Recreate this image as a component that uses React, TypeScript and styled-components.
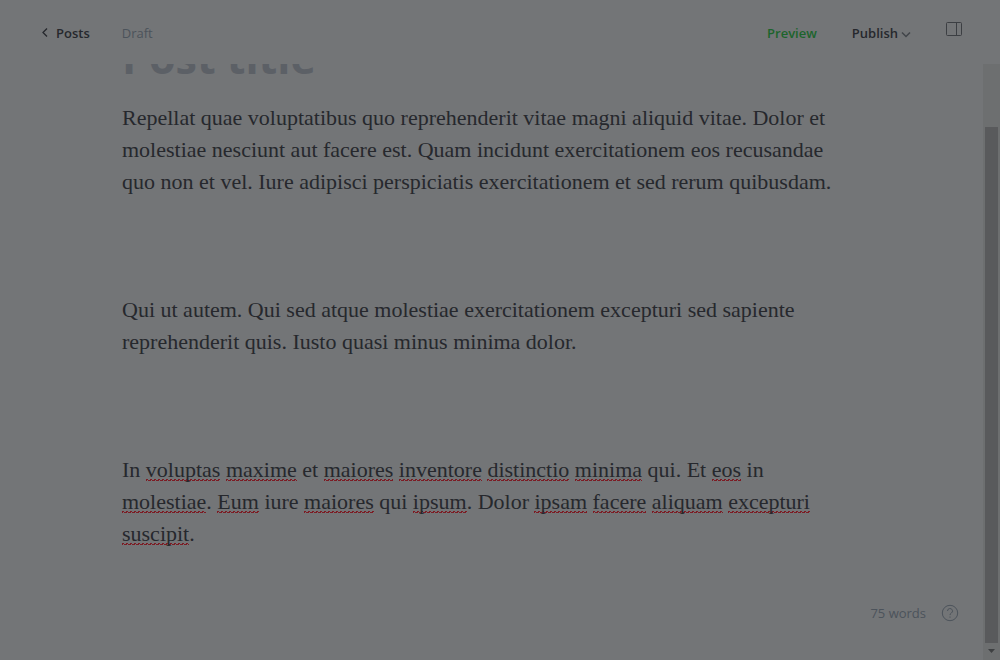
import React from "react";
import styled, { createGlobalStyle } from "styled-components";

const ink = "#26282d";
const muted = "#4c535b";
const canvas = "#737577";
const squiggle = "#7c1c24";

const GlobalStyle = createGlobalStyle`
  * { box-sizing: border-box; }
  html, body, #root { height: 100%; }
  body {
    margin: 0;
    background: ${canvas};
    color: ${ink};
    font-family: "Open Sans", "Noto Sans", sans-serif;
  }
`;

const Editor = styled.div`
  display: flex;
  flex-direction: column;
  height: 100vh;
  overflow: hidden;
`;

const Header = styled.header`
  display: flex;
  align-items: center;
  flex: none;
  height: 64px;
  padding: 2px 38px 0 40px;
  font-size: 13px;
  line-height: 20px;
`;

const BackLink = styled.a`
  display: flex;
  align-items: center;
  gap: 6px;
  color: ${ink};
  font-weight: 600;
  text-decoration: none;
`;

const Status = styled.span`
  margin-left: 32px;
  color: ${muted};
`;

const Actions = styled.div`
  display: flex;
  align-items: center;
  align-self: stretch;
  gap: 35px;
  margin-left: auto;
`;

const TextButton = styled.button<{ $tone: string }>`
  display: flex;
  align-items: center;
  gap: 3px;
  padding: 0;
  border: 0;
  background: none;
  color: ${(p) => p.$tone};
  font: inherit;
  font-weight: 600;
`;

const IconButton = styled.button`
  display: flex;
  padding: 0;
  border: 0;
  background: none;
  color: inherit;
`;

const PanelToggle = styled(IconButton)`
  align-self: flex-start;
  padding-top: 20px;
`;

const Body = styled.div`
  display: flex;
  flex: 1;
  min-height: 0;
`;

const Scroller = styled.main`
  flex: 1;
  min-width: 0;
  overflow: hidden;
  padding: 0 122px;
`;

const Title = styled.input`
  display: block;
  width: 100%;
  height: 56px;
  margin: -34px 0 16px;
  padding: 0;
  border: 0;
  outline: 0;
  background: none;
  color: ${ink};
  font: 700 43px/56px "Open Sans", "Noto Sans", sans-serif;
  &::placeholder { color: #5c6066; opacity: 1; }
`;

const Copy = styled.article`
  outline: 0;
  font-family: "Liberation Serif", serif;
  font-size: 22px;
  line-height: 32px;
  white-space: nowrap;
`;

const Paragraph = styled.p`
  margin: 0 0 96px;
`;

const Misspelled = styled.span`
  background:
    linear-gradient(90deg, ${squiggle} 2px, transparent 2px) 0 calc(100% - 2px) / 4px 1px repeat-x,
    linear-gradient(90deg, transparent 1px, ${squiggle} 1px) 1px calc(100% - 1px) / 4px 1px repeat-x;
`;

const Track = styled.div`
  display: flex;
  flex-direction: column;
  flex: none;
  width: 17px;
  padding: 63px 2px 0;
  background: #6d6f70;
`;

const Thumb = styled.div`
  flex: 1;
  background: #595a5c;
`;

const ArrowDown = styled.svg`
  display: block;
  flex: none;
  width: 13px;
  height: 17px;
`;

const Footer = styled.footer`
  position: absolute;
  right: 41px;
  bottom: 36px;
  display: flex;
  align-items: center;
  gap: 15px;
  color: ${muted};
  font-size: 13px;
  line-height: 22px;
`;

const M = Misspelled;

export default function App() {
  return (
    <Editor>
      <GlobalStyle />
      <Header>
        <BackLink href="#posts">
          <svg width="10" height="12" viewBox="0 0 10 12" fill="none" stroke="currentColor" strokeWidth="1.3" aria-hidden="true">
            <path d="M7 1.500 3 5.500l4 4" />
          </svg>
          Posts
        </BackLink>
        <Status>Draft</Status>
        <Actions>
          <TextButton type="button" $tone="#1c642c">Preview</TextButton>
          <TextButton type="button" $tone={ink}>
            Publish
            <svg width="10" height="10" viewBox="0 0 10 10" fill="none" stroke="#414549" strokeWidth="1.5" aria-hidden="true">
              <path d="M1 4.500 5 8.500l4-4" />
            </svg>
          </TextButton>
          <PanelToggle type="button" aria-label="Settings">
            <svg width="16" height="14" viewBox="0 0 16 14" fill="none" stroke="#3c3f43" aria-hidden="true">
              <rect x="0.5" y="0.5" width="15" height="13" rx="1" />
              <path d="M10.5 1v12" />
            </svg>
          </PanelToggle>
        </Actions>
      </Header>
      <Body>
        <Scroller>
          <Title aria-label="Post title" placeholder="Post title" />
          <Copy contentEditable suppressContentEditableWarning spellCheck={false} role="textbox" aria-label="Post body">
            <Paragraph>
              Repellat quae voluptatibus quo reprehenderit vitae magni aliquid vitae. Dolor et<br />
              molestiae nesciunt aut facere est. Quam incidunt exercitationem eos recusandae<br />
              quo non et vel. Iure adipisci perspiciatis exercitationem et sed rerum quibusdam.
            </Paragraph>
            <Paragraph>
              Qui ut autem. Qui sed atque molestiae exercitationem excepturi sed sapiente<br />
              reprehenderit quis. Iusto quasi minus minima dolor.
            </Paragraph>
            <Paragraph>
              In <M>voluptas</M> <M>maxime</M> et <M>maiores</M> <M>inventore</M> <M>distinctio</M> <M>minima</M> qui. Et <M>eos</M> in<br />
              <M>molestiae</M>. <M>Eum</M> iure <M>maiores</M> qui <M>ipsum</M>. Dolor <M>ipsam</M> <M>facere</M> <M>aliquam</M> <M>excepturi</M><br />
              <M>suscipit</M>.
            </Paragraph>
          </Copy>
        </Scroller>
        <Track aria-hidden="true">
          <Thumb />
          <ArrowDown viewBox="0 0 13 17">
            <path d="M3 6h7L6.500 10z" fill="#3e4042" />
          </ArrowDown>
        </Track>
      </Body>
      <Footer>
        <span>75 words</span>
        <IconButton type="button" aria-label="Help">
          <svg width="18" height="18" viewBox="0 0 18 18" fill="none" stroke={muted} aria-hidden="true">
            <circle cx="9" cy="9" r="7.700" />
            <path d="M6.500 7a2.500 2.500 0 1 1 3.700 2.200c-.8.500-1.200.9-1.200 1.900" />
            <path d="M9 12.500v1.200" />
          </svg>
        </IconButton>
      </Footer>
    </Editor>
  );
}
